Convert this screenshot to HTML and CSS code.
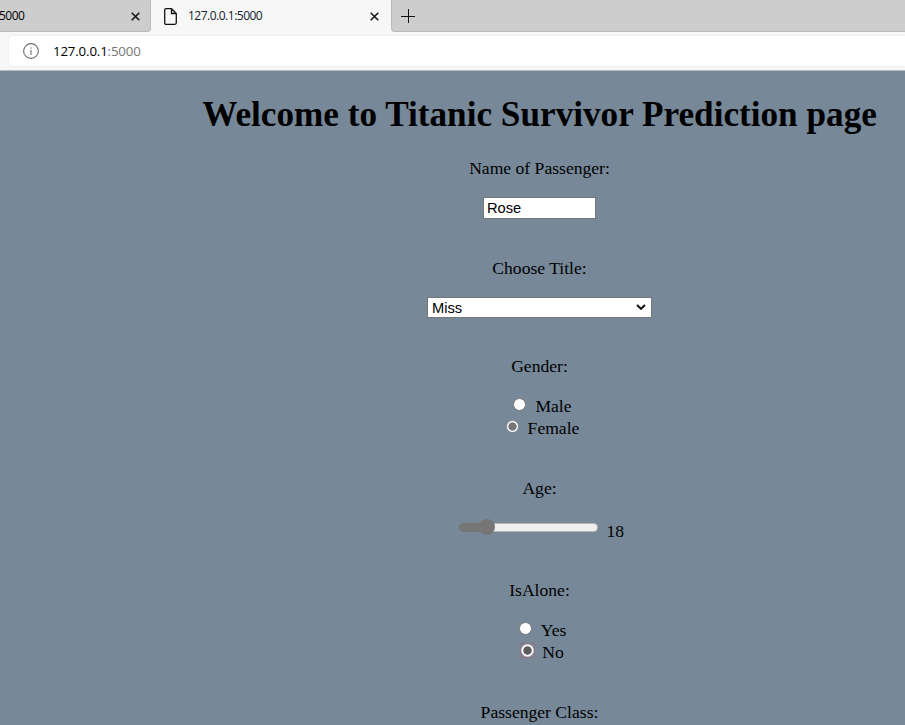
FILE: index.html
```html
<!DOCTYPE html>
<html lang="en">
<head>
<meta charset="utf-8">
<title>127.0.0.1:5000</title>
<link rel="stylesheet" href="styles.css">
</head>
<body>
<header class="browser">
  <div class="tabs">
    <div class="tab tab-left"><span class="tab-title">5000</span>
      <svg class="close" width="9" height="9" viewBox="0 0 9 9"><path d="M.7.7l7.6 7.6M8.3.7L.7 8.3"/></svg>
    </div>
    <div class="tab tab-active">
      <svg class="page" width="13" height="17" viewBox="0 0 13 17"><path d="M2.2.7H7.5L12.3 5.5V14.8Q12.3 16.3 10.8 16.3H2.2Q.7 16.3.7 14.8V2.2Q.7.7 2.2.7ZM7.5.7V5.5H12.3"/></svg>
      <span class="tab-title">127.0.0.1:5000</span>
      <svg class="close" width="9" height="9" viewBox="0 0 9 9"><path d="M.7.7l7.6 7.6M8.3.7L.7 8.3"/></svg>
    </div>
    <div class="tab tab-rest">
      <svg class="plus" width="14" height="14" viewBox="0 0 14 14"><path d="M0 7.5H14M7.5 0V14"/></svg>
    </div>
  </div>
  <div class="address">
    <svg class="info" width="16" height="16" viewBox="0 0 16 16"><circle cx="8" cy="8" r="7.4"/><path d="M8 7V12M8 4.3V5.7"/></svg>
    <span class="url">127.0.0.1<span class="port">:5000</span></span>
  </div>
</header>
<main class="content">
  <h1>Welcome to Titanic Survivor Prediction page</h1>
  <form>
    <section class="field field-name">
      <label for="name">Name of Passenger:</label>
      <input id="name" class="text" type="text" value="Rose">
    </section>
    <section class="field field-title">
      <label for="title">Choose Title:</label>
      <div class="select-wrap">
        <select id="title"><option>Miss</option></select>
        <svg class="chevron" width="10" height="6" viewBox="0 0 10 6"><path d="M1 1L5 4.8L9 1"/></svg>
      </div>
    </section>
    <section class="field field-radio">
      <p class="label">Gender:</p>
      <label class="choice"><input type="radio" name="gender">Male</label>
      <label class="choice"><input type="radio" name="gender" checked>Female</label>
    </section>
    <section class="field field-age">
      <label for="age">Age:</label>
      <div class="slider"><input id="age" type="range" min="0" max="100" value="16"><output>18</output></div>
    </section>
    <section class="field field-radio">
      <p class="label">IsAlone:</p>
      <label class="choice"><input type="radio" name="alone">Yes</label>
      <label class="choice choice-current"><input type="radio" name="alone" checked>No</label>
    </section>
    <section class="field"><p class="label">Passenger Class:</p></section>
  </form>
</main>
</body>
</html>
```
FILE: styles.css
```css
* { box-sizing: border-box; }
body {
  margin: 0;
  height: 725px;
  overflow: hidden;
  background: #778899;
  color: #000;
  font: 17.6px/20px "Liberation Serif", serif;
}
svg { display: block; flex: none; fill: none; stroke: #111; }

.browser {
  height: 71px;
  background: #f7f7f7;
  border-bottom: 1px solid #b9bcba;
  font-family: "Open Sans", "Noto Sans", sans-serif;
}
.tabs { display: flex; height: 32px; }
.tab { display: flex; align-items: center; height: 32px; font-size: 12px; }
.tab-title { letter-spacing: -0.5px; }
.tab-left .tab-title { margin-left: -1px; }
.tab-left {
  width: 151px;
  padding-right: 10px;
  justify-content: space-between;
  background: #cdcdcd;
  border-right: 1px solid #b9b9b9;
  border-bottom: 1px solid #b9b9b9;
  border-bottom-right-radius: 4px;
}
.tab-active { width: 240px; padding: 0 12px 0 13px; }
.tab-active .tab-title { margin: 0 auto 0 11px; color: #10202c; }
.tab-rest {
  flex: 1;
  padding-left: 9px;
  background: #cdcdcd;
  border-left: 1px solid #b9b9b9;
  border-bottom: 1px solid #b9b9b9;
  border-bottom-left-radius: 4px;
}
.close { stroke-width: 1.5; margin-top: 1px; }
.page { stroke-width: 1.3; }
.address {
  display: flex;
  align-items: center;
  height: 30px;
  margin: 4px 0 0 9px;
  padding-left: 14px;
  background: #fff;
  border-radius: 4px 0 0 4px;
  box-shadow: 0 0 2px #ddd;
  font-size: 13.3px;
}
.info { stroke: #707070; stroke-width: 1.1; }
.url { margin-left: 14px; letter-spacing: -0.17px; }
.port { color: #767676; }

.content { width: 731px; margin-left: 174px; padding-top: 24px; text-align: center; }
h1 { margin: 0 0 23px; font-size: 35.2px; line-height: 40px; white-space: nowrap; }
.field { display: flex; flex-direction: column; align-items: center; }
.field > label:first-child, .label { height: 20px; margin: 0 0 19px; }
.field-name { height: 100px; }
.field-title { height: 98px; }
.field-radio { height: 122px; }
.field-age { height: 102px; }
.text {
  width: 113px;
  height: 22px;
  padding: 0 3px;
  border: 1px solid #767676;
  background: #fff;
  font: 14.67px "Liberation Sans", sans-serif;
}
.select-wrap { position: relative; width: 225px; height: 21px; }
select {
  display: block;
  width: 100%;
  height: 100%;
  padding: 0 4px;
  appearance: none;
  border: 1px solid #767676;
  border-radius: 0;
  background: #fff;
  color: #000;
  font: 14.67px "Liberation Sans", sans-serif;
}
.chevron { position: absolute; right: 6px; top: 7px; stroke-width: 2; }
.choice { display: flex; height: 22px; margin-left: 6px; line-height: 22px; }
.choice input {
  appearance: none;
  width: 13px;
  height: 13px;
  margin: 3px 9px 0 0;
  border: 1px solid #767676;
  border-radius: 50%;
  background: #fff;
}
.choice input:checked {
  border-color: #8c929a;
  background: radial-gradient(circle, #767676 0 3.8px, #fff 4.5px);
}
.choice-current {
  margin-left: 5px;
  padding-left: 1px;
  background: linear-gradient(#95707f, #95707f) 0 2px / 15px 1px no-repeat,
    linear-gradient(#95707f, #95707f) 0 16px / 15px 1px no-repeat,
    linear-gradient(#95707f, #95707f) 0 2px / 1px 15px no-repeat,
    linear-gradient(#95707f, #95707f) 14px 2px / 1px 15px no-repeat;
}
.choice-current input { margin-right: 8px; }
.choice-current input:checked {
  border-color: #d9dbde;
  background: radial-gradient(circle, #5c5c5c 0 3.8px, #fff 4.6px);
}
.slider { display: flex; width: 165px; margin-left: 4px; }
.slider input {
  appearance: none;
  width: 140px;
  height: 16px;
  margin: 2px 8px 0 0;
  background: none;
}
.slider input::-webkit-slider-runnable-track {
  height: 9px;
  border: 1px solid rgb(118 118 118 / 45%);
  border-radius: 5px;
  background: linear-gradient(90deg, #767676 0 28px, #efefef 28px) border-box;
}
.slider input::-webkit-slider-thumb {
  appearance: none;
  width: 16px;
  height: 16px;
  margin-top: -4.5px;
  border-radius: 50%;
  background: #767676;
}
.slider output { line-height: 28px; }
```
